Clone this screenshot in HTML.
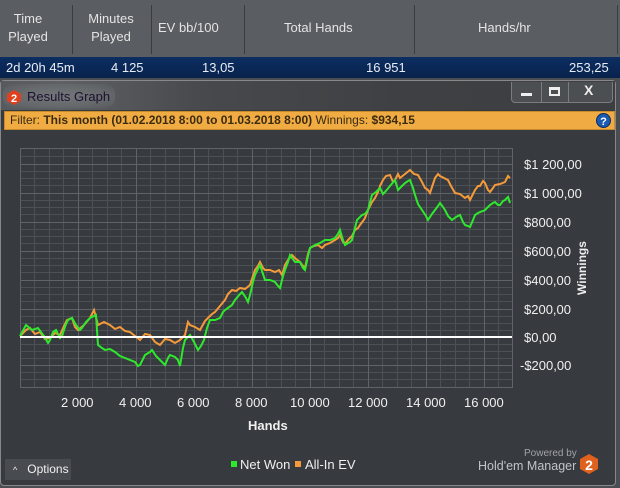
<!DOCTYPE html>
<html><head><meta charset="utf-8"><style>
*{margin:0;padding:0;box-sizing:border-box}
body{width:620px;height:488px;overflow:hidden;background:#4a4d51;font-family:"Liberation Sans",sans-serif;position:relative}
.hdr{position:absolute;left:0;top:0;width:620px;height:57px;background:#5a5d61;color:#e4e4e4;font-size:13px}
.hdr div{position:absolute;text-align:center;line-height:18px}
.sep{position:absolute;top:5px;width:1px;height:49px;background:#3a3c3f}
.row{position:absolute;left:0;top:57px;width:620px;height:21px;background:linear-gradient(#0c2e62,#08224c);color:#e8ecf4;font-size:13px}
.row span{position:absolute;top:3px}
.win{position:absolute;left:0;top:80px;width:616px;height:406px;background:#373a3e;border:1px solid #888;border-radius:4px}
.title{position:absolute;left:0;top:0;width:614px;height:29px;background:linear-gradient(90deg,#56595d 0px,#5e6164 60px,#48494c 200px,#3e4043 400px,#3c3e41)}
.btns{position:absolute;left:510px;top:1px;width:102px;height:21px;border:1px solid #7a7c80;border-top:none;border-radius:0 0 4px 4px;background:#4c4f52}
.filter{position:absolute;left:3px;top:30px;width:611px;height:19px;background:#f0ac42;border:1px solid #c88a2a;font-size:12px;color:#3a2a10;line-height:17px;padding-left:5px}
.lab{position:absolute;color:#f0f0f0;font-size:13px}
</style></head><body>
<div class="hdr">
<div style="left:0;top:10px;width:56px">Time<br>Played</div>
<div style="left:76px;top:10px;width:70px">Minutes<br>Played</div>
<div style="left:158px;top:19px">EV bb/100</div>
<div style="left:284px;top:19px">Total Hands</div>
<div style="left:478px;top:19px">Hands/hr</div>
<span class="sep" style="left:72px"></span><span class="sep" style="left:151px"></span><span class="sep" style="left:244px"></span><span class="sep" style="left:414px"></span><span class="sep" style="left:617px"></span>
</div>
<div class="row"><span style="left:6px">2d 20h 45m</span><span style="left:111px">4 125</span><span style="left:202px">13,05</span><span style="left:366px">16 951</span><span style="left:569px">253,25</span></div>
<div class="win">
<div class="title">
<div style="position:absolute;left:2px;top:3px;width:112px;height:24px;border-radius:10px;background:radial-gradient(ellipse at center,#74777a 0%,#66696c 60%,rgba(90,93,97,0) 100%)"></div>
<svg style="position:absolute;left:6px;top:9px" width="14" height="15" viewBox="0 0 14 15"><polygon points="7,0 14,4 14,11 7,15 0,11 0,4" fill="#e0401e"/><text x="7" y="12" font-size="11" font-weight="bold" fill="#fff" text-anchor="middle" font-family="Liberation Sans">2</text></svg>
<span style="position:absolute;left:26px;top:8px;font-size:13px;color:#1e1030">Results Graph</span>
<div class="btns">
<span style="position:absolute;left:29px;top:0;width:1px;height:20px;background:#7a7c80"></span>
<span style="position:absolute;left:56px;top:0;width:1px;height:20px;background:#7a7c80"></span>
<span style="position:absolute;left:9px;top:11px;width:11px;height:3px;background:#eee"></span>
<span style="position:absolute;left:37px;top:5px;width:11px;height:9px;border:2px solid #eee;border-top-width:3px"></span>
<span style="position:absolute;left:72px;top:0px;color:#eee;font-weight:bold;font-size:14px">X</span>
</div>
</div>
<div class="filter">Filter: <b>This month (01.02.2018 8:00 to 01.03.2018 8:00)</b> Winnings: <b>$934,15</b>
<svg style="position:absolute;right:3px;top:1px" width="15" height="15"><circle cx="7.5" cy="7.5" r="7" fill="#1a5ab0" stroke="#0a2a60"/><text x="7.5" y="12" font-size="11" font-weight="bold" fill="#fff" text-anchor="middle" font-family="Liberation Sans">?</text></svg></div>
</div>
<svg style="position:absolute;left:0;top:0" width="620" height="488">
<g stroke="#4d5054" stroke-width="1">
<path d="M20.5 148V387M49.5 148V387M107.5 148V387M165.5 148V387M223.5 148V387M281.5 148V387M339.5 148V387M397.5 148V387M455.5 148V387M34.5 148V387M63.5 148V387M92.5 148V387M121.5 148V387M150.5 148V387M179.5 148V387M208.5 148V387M237.5 148V387M266.5 148V387M295.5 148V387M324.5 148V387M353.5 148V387M382.5 148V387M411.5 148V387M440.5 148V387M469.5 148V387M498.5 148V387"/>
<path d="M20 156.5H512M20 171.5H512M20 178.5H512M20 185.5H512M20 200.5H512M20 207.5H512M20 214.5H512M20 229.5H512M20 236.5H512M20 243.5H512M20 258.5H512M20 265.5H512M20 272.5H512M20 287.5H512M20 294.5H512M20 301.5H512M20 316.5H512M20 323.5H512M20 330.5H512M20 344.5H512M20 351.5H512M20 358.5H512M20 372.5H512M20 379.5H512"/>
</g>
<g stroke="#606367" stroke-width="1">
<path d="M78.5 148V387M136.5 148V387M194.5 148V387M252.5 148V387M310.5 148V387M368.5 148V387M426.5 148V387M484.5 148V387"/>
<path d="M20 164.5H512M20 193.5H512M20 222.5H512M20 251.5H512M20 280.5H512M20 309.5H512M20 365.5H512"/>
<rect x="20.5" y="148.5" width="492" height="239" fill="none"/>
</g>
<polyline fill="none" stroke="#f59a3a" stroke-width="2" points="20,336 26,330 30,328 35,334 40,332 45,339 50,338 55,333 60,335 64,326 67,320 72,318 75,327 78,330 84,325 90,318 94,310 98,325 104,322 110,325 115,329 120,327 125,331 130,332 135,336 140,340 145,334 150,335 155,342 160,345 165,339 170,340 175,343 180,340 185,335 188,322 190,325 195,327 200,330 205,321 208,318 212,314 215,312 220,306 225,300 228,294 232,290 236,291 240,288 245,289 250,285 253,276 255,270 258,266 260,262 263,268 265,270 270,270 275,272 279,270 282,275 285,265 288,260 292,255 296,259 300,262 303,266 305,268 308,254 310,248 314,246 318,245 322,248 325,245 330,243 335,240 338,238 340,235 343,242 345,244 348,240 350,238 352,236 355,230 358,228 360,225 363,221 365,218 368,210 372,202 375,198 378,192 380,186 383,180 386,176 390,175 393,182 395,180 398,174 400,178 405,174 410,170 414,174 418,175 422,182 425,188 428,190 430,193 433,184 435,178 438,174 440,176 444,178 448,180 451,186 455,193 460,194 465,198 468,196 470,200 473,194 475,190 478,186 480,186 483,181 485,183 488,190 490,192 493,188 495,185 500,184 505,182 508,176 510,178"/>
<polyline fill="none" stroke="#2ee82e" stroke-width="2" points="20,336 26,325 32,330 38,328 44,336 48,343 50,340 53,332 56,330 60,338 62,336 66,324 68,320 72,318 76,325 80,330 82,328 86,322 90,318 96,315 98,345 102,348 105,350 110,349 115,352 120,356 125,358 130,360 135,362 138,366 140,365 145,355 150,352 152,350 156,356 160,360 163,363 165,365 168,358 170,355 175,357 178,360 180,366 183,348 185,340 190,335 194,342 198,350 201,346 204,340 207,328 210,320 215,320 220,318 223,312 225,310 232,305 235,300 240,294 242,292 246,298 248,302 250,295 253,282 255,275 260,265 263,274 265,280 270,280 275,282 278,286 280,288 283,276 285,270 288,262 290,255 295,262 300,262 303,268 305,270 308,256 310,248 315,245 320,243 325,240 330,240 335,238 338,234 340,230 343,240 345,245 350,242 352,240 355,228 357,220 362,215 365,214 368,210 370,202 372,195 376,192 380,188 383,194 385,192 390,186 395,180 398,190 402,186 405,183 408,181 410,180 413,188 415,195 418,204 422,210 426,216 428,220 432,214 435,210 438,206 440,203 443,207 445,210 448,216 452,220 456,217 460,215 463,222 465,225 468,226 470,227 473,220 475,215 478,213 480,212 483,211 485,210 488,207 490,205 493,203 495,202 498,205 500,205 503,201 505,200 508,197 510,203"/>
<line x1="20" y1="337" x2="512" y2="337" stroke="#fff" stroke-width="2"/>
<rect x="231" y="461" width="6" height="6" fill="#2ee82e"/>
<rect x="295" y="461" width="6" height="6" fill="#f59a3a"/>
<polygon points="589,454 598,459 598,469 589,474 580,469 580,459" fill="#e0601e"/>
<text x="589" y="470" font-size="14" font-weight="bold" fill="#fff" text-anchor="middle" font-family="Liberation Sans">2</text>
<text x="586" y="268" font-size="12" font-weight="bold" fill="#eee" text-anchor="middle" transform="rotate(-90 586 268)" font-family="Liberation Sans">Winnings</text>
</svg>
<div class="lab" style="left:524px;top:157px">$1 200,00</div>
<div class="lab" style="left:524px;top:186px">$1 000,00</div>
<div class="lab" style="left:524px;top:215px">$800,00</div>
<div class="lab" style="left:524px;top:244px">$600,00</div>
<div class="lab" style="left:524px;top:273px">$400,00</div>
<div class="lab" style="left:524px;top:302px">$200,00</div>
<div class="lab" style="left:524px;top:330px">$0,00</div>
<div class="lab" style="left:520px;top:358px">-$200,00</div>
<div class="lab" style="left:61px;top:395px">2 000</div>
<div class="lab" style="left:119px;top:395px">4 000</div>
<div class="lab" style="left:177px;top:395px">6 000</div>
<div class="lab" style="left:235px;top:395px">8 000</div>
<div class="lab" style="left:290px;top:395px">10 000</div>
<div class="lab" style="left:348px;top:395px">12 000</div>
<div class="lab" style="left:406px;top:395px">14 000</div>
<div class="lab" style="left:464px;top:395px">16 000</div>
<div class="lab" style="left:248px;top:418px;font-weight:bold">Hands</div>
<div style="position:absolute;left:5px;top:459px;width:66px;height:21px;background:#484b4f;color:#f0f0f0;font-size:12px;line-height:21px"><span style="margin-left:8px;font-size:9px">^</span><span style="margin-left:10px">Options</span></div>
<div class="lab" style="left:240px;top:457px;color:#f0f0f0">Net Won</div>
<div class="lab" style="left:305px;top:457px;color:#f0f0f0">All-In EV</div>
<div style="position:absolute;left:524px;top:448px;font-size:10px;color:#a0a3a8">Powered by</div>
<div style="position:absolute;left:478px;top:459px;font-size:12.5px;color:#c0c3c8">Hold'em Manager</div>
</body></html>
